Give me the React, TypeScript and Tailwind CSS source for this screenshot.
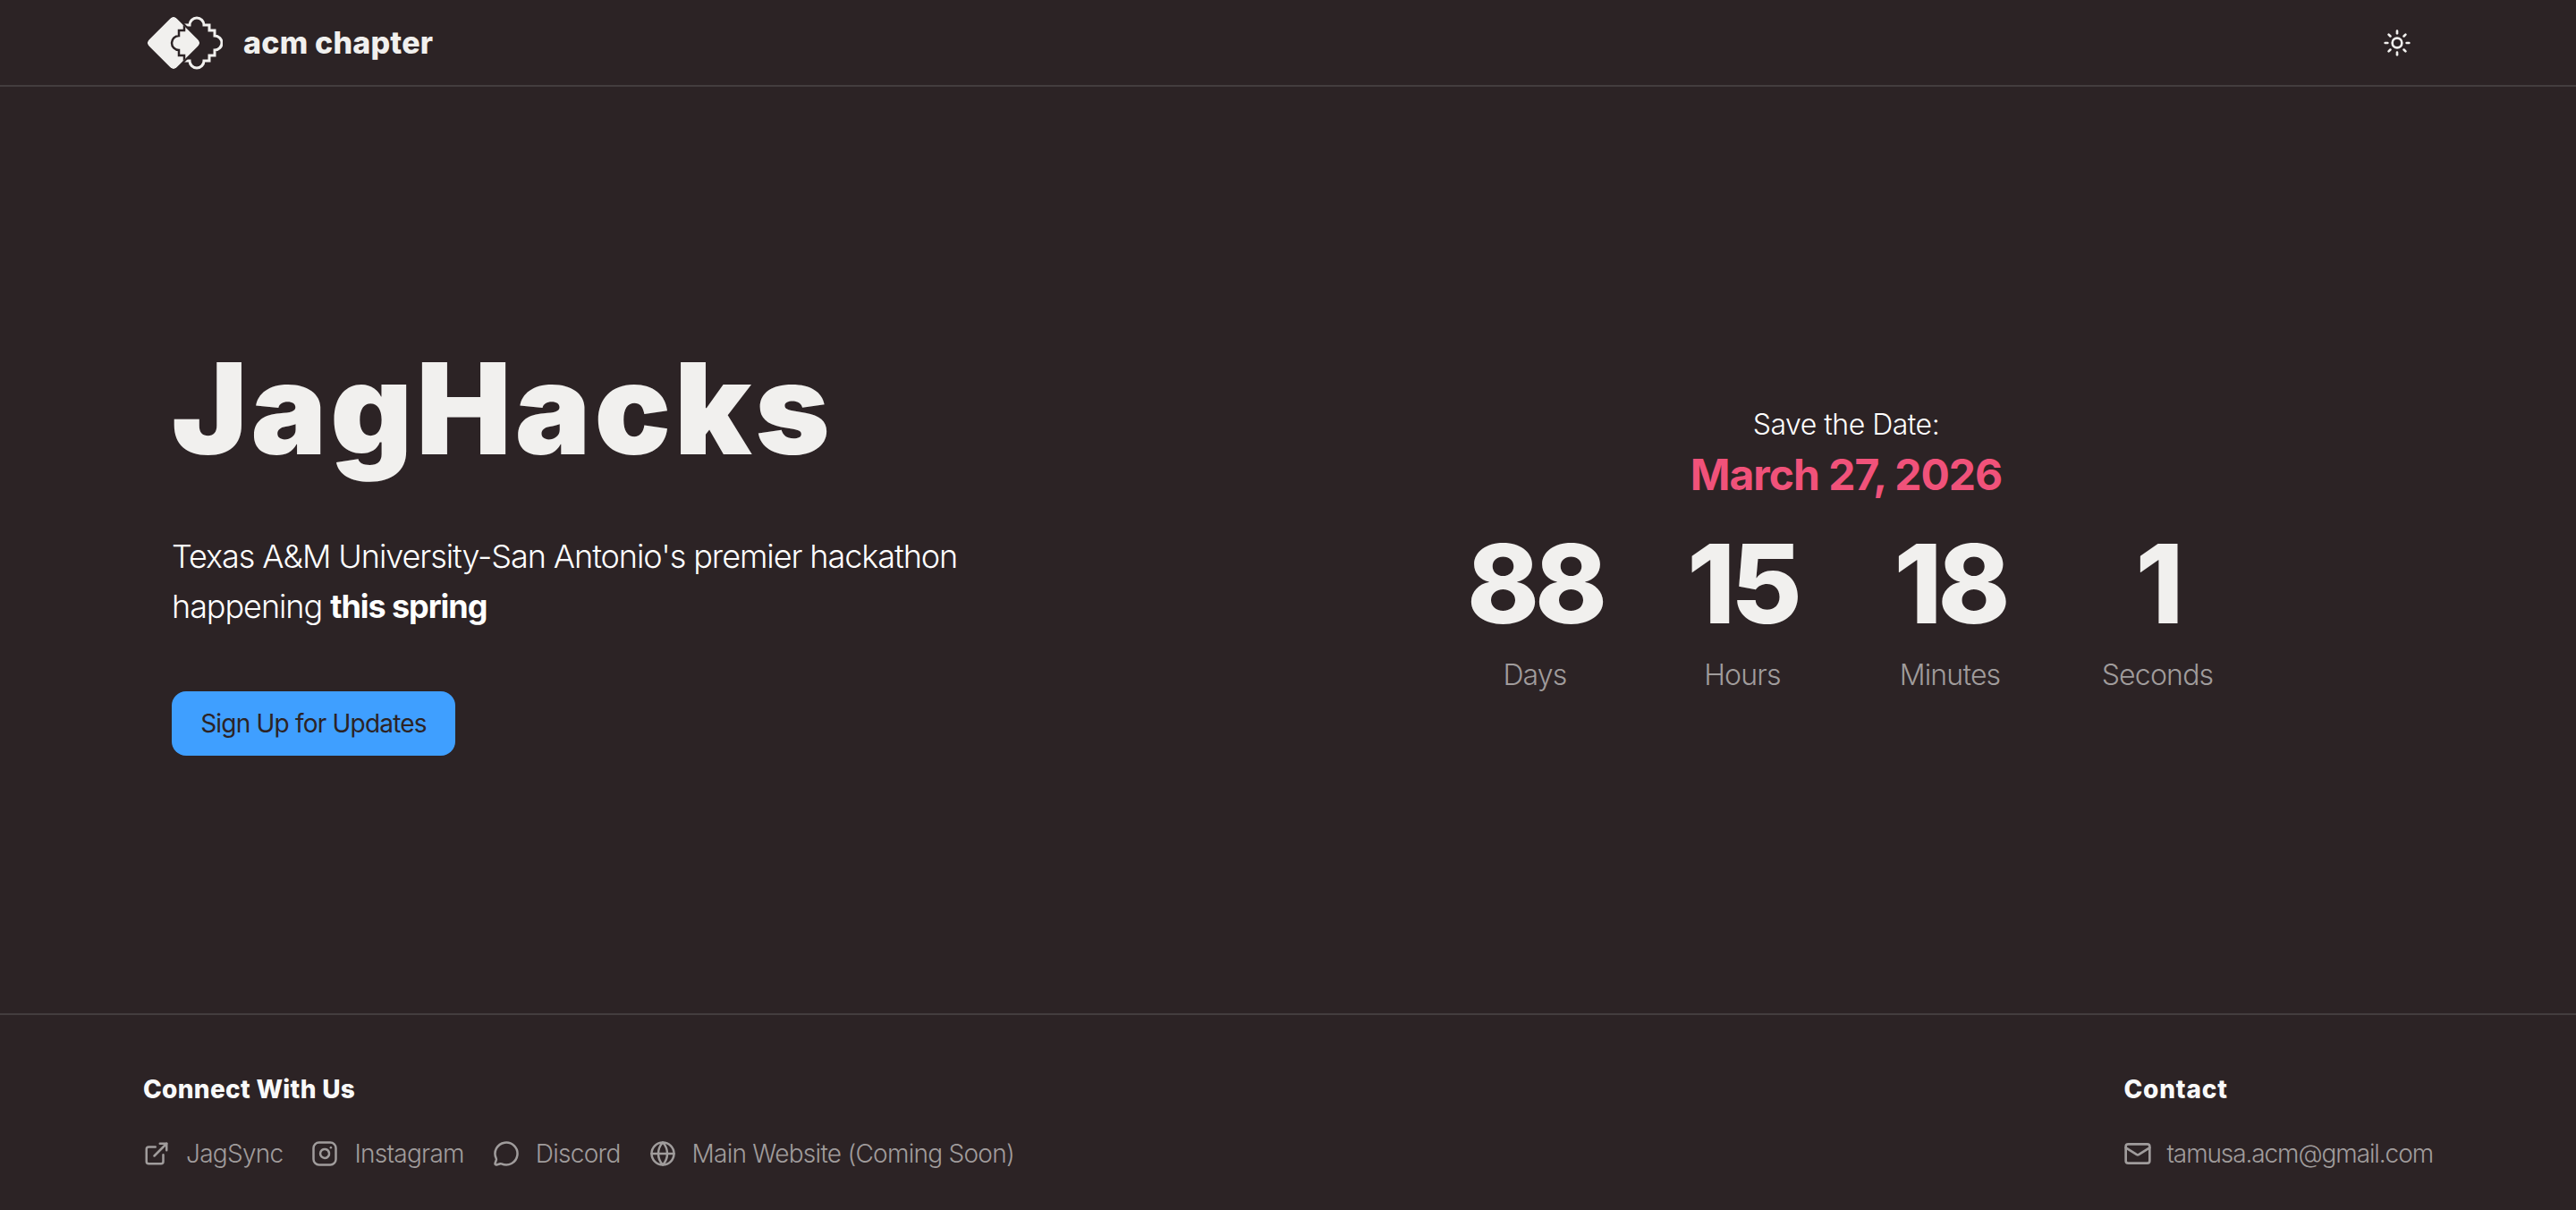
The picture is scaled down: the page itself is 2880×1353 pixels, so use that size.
import React from 'react';
import { ExternalLink, Globe, Instagram, Mail, MessageCircle, Sun } from 'lucide-react';

const links = [
  { label: 'JagSync', icon: ExternalLink },
  { label: 'Instagram', icon: Instagram },
  { label: 'Discord', icon: MessageCircle },
  { label: 'Main Website (Coming Soon)', icon: Globe },
];

const countdown = [
  { value: '88', label: 'Days' },
  { value: '15', label: 'Hours' },
  { value: '18', label: 'Minutes' },
  { value: '1', label: 'Seconds' },
];

const scallop =
  'M-8 -20 A8 8 0 0 1 8 -20 H14 V-14 H20 V-8 A8 8 0 0 1 20 8 V14 H14 V20 H8 A8 8 0 0 1 -8 20 H-14 V14 H-20 V8 A8 8 0 0 1 -20 -8 V-14 H-14 V-20 Z';

function Logo() {
  return (
    <svg viewBox="6 8 84 60" className="w-[84px] h-[60px] shrink-0">
      <defs>
        <clipPath id="diamond-clip">
          <rect x="13" y="16" width="44" height="44" rx="5" transform="rotate(45 35 38)" />
        </clipPath>
      </defs>
      <path d={scallop} transform="translate(61 38)" fill="none" stroke="#f1f0ee" strokeWidth="3" />
      <rect x="13" y="16" width="44" height="44" rx="5" transform="rotate(45 35 38)" fill="#f1f0ee" stroke="#2c2325" strokeWidth="4" />
      <g clipPath="url(#diamond-clip)">
        <rect x="13" y="16" width="44" height="44" rx="5" transform="rotate(45 35 38)" fill="#f1f0ee" />
        <path d={scallop} transform="translate(61 38)" fill="none" stroke="#2c2325" strokeWidth="2.5" />
      </g>
    </svg>
  );
}

export default function App() {
  return (
    <div className="w-full min-h-[1353px] flex flex-col bg-[#2c2325] font-['Inter',sans-serif]">
      {/* --- NAV --- */}
      <header className="h-[97px] border-b-2 border-[#433d3e] pl-[165px] pr-[184px] flex items-center justify-between">
        <div className="flex items-center gap-[23px]">
          <Logo />
          <span className="text-[34px] font-extrabold text-[#f1f0ee] tracking-[0.2px]">acm chapter</span>
        </div>
        <Sun className="w-8 h-8 text-[#f1f0ee]" strokeWidth={2} />
      </header>

      {/* --- HERO --- */}
      <main className="h-[1036px] grid grid-cols-2 items-center pl-[192px]">
        <div className="flex flex-col items-start">
          <h1 className="text-[142px] leading-[142px] font-black text-[#f1f0ee] tracking-[4px] mb-[67px]">JagHacks</h1>
          <p className="text-[36px] leading-[56px] text-white font-light w-[1000px] tracking-[-1.06px] mb-[67px]">
            Texas A&amp;M University-San Antonio's premier hackathon<br />
            happening <strong className="font-bold">this spring</strong>
          </p>
          <button className="h-[72px] w-[317px] rounded-2xl bg-[#3f9fff] text-[28px] tracking-[-0.8px] text-[#2c2325]">Sign Up for Updates</button>
        </div>
        <div className="flex flex-col items-center pr-[288px]">
          <p className="text-[32px] leading-[48px] text-white font-light tracking-[-0.5px]">Save the Date:</p>
          <p className="text-[48px] leading-[60px] mt-[2px] font-bold text-[#f0527a] tracking-[-1px]">March 27, 2026</p>
          <div className="flex mt-[20px]">
            {countdown.map((c) => (
              <div key={c.label} className="w-[232px] flex flex-col items-center">
                <span className="text-[122px] leading-[144px] font-extrabold text-[#f1f0ee] tracking-[-5px]">{c.value}</span>
                <span className="text-[32px] leading-[48px] mt-[6px] font-light text-[#a09c9c] tracking-[-0.8px]">{c.label}</span>
              </div>
            ))}
          </div>
        </div>
      </main>

      {/* --- FOOTER --- */}
      <footer className="h-[220px] border-t-2 border-[#433d3e] px-[160px] pt-[63px] flex justify-between">
        <div>
          <h3 className="text-[28px] leading-[40px] font-extrabold text-[#f9f9f9] tracking-[0.3px]">Connect With Us</h3>
          <div className="flex gap-[32px] mt-[32px]">
            {links.map((l) => (
              <div key={l.label} className="flex items-center gap-[18px] text-[28px] leading-[40px] font-light text-[#a09c9c] tracking-[-0.73px]">
                <l.icon className="w-[30px] h-[30px]" strokeWidth={2} />
                {l.label}
              </div>
            ))}
          </div>
        </div>
        <div>
          <h3 className="text-[28px] leading-[40px] font-extrabold text-[#f9f9f9] tracking-[0.8px]">Contact</h3>
          <div className="flex items-center gap-[16px] mt-[32px] text-[28px] leading-[40px] font-light text-[#a09c9c] tracking-[-1.1px]">
            <Mail className="w-8 h-8" strokeWidth={2} />
            tamusa.acm@gmail.com
          </div>
        </div>
      </footer>
    </div>
  );
}
